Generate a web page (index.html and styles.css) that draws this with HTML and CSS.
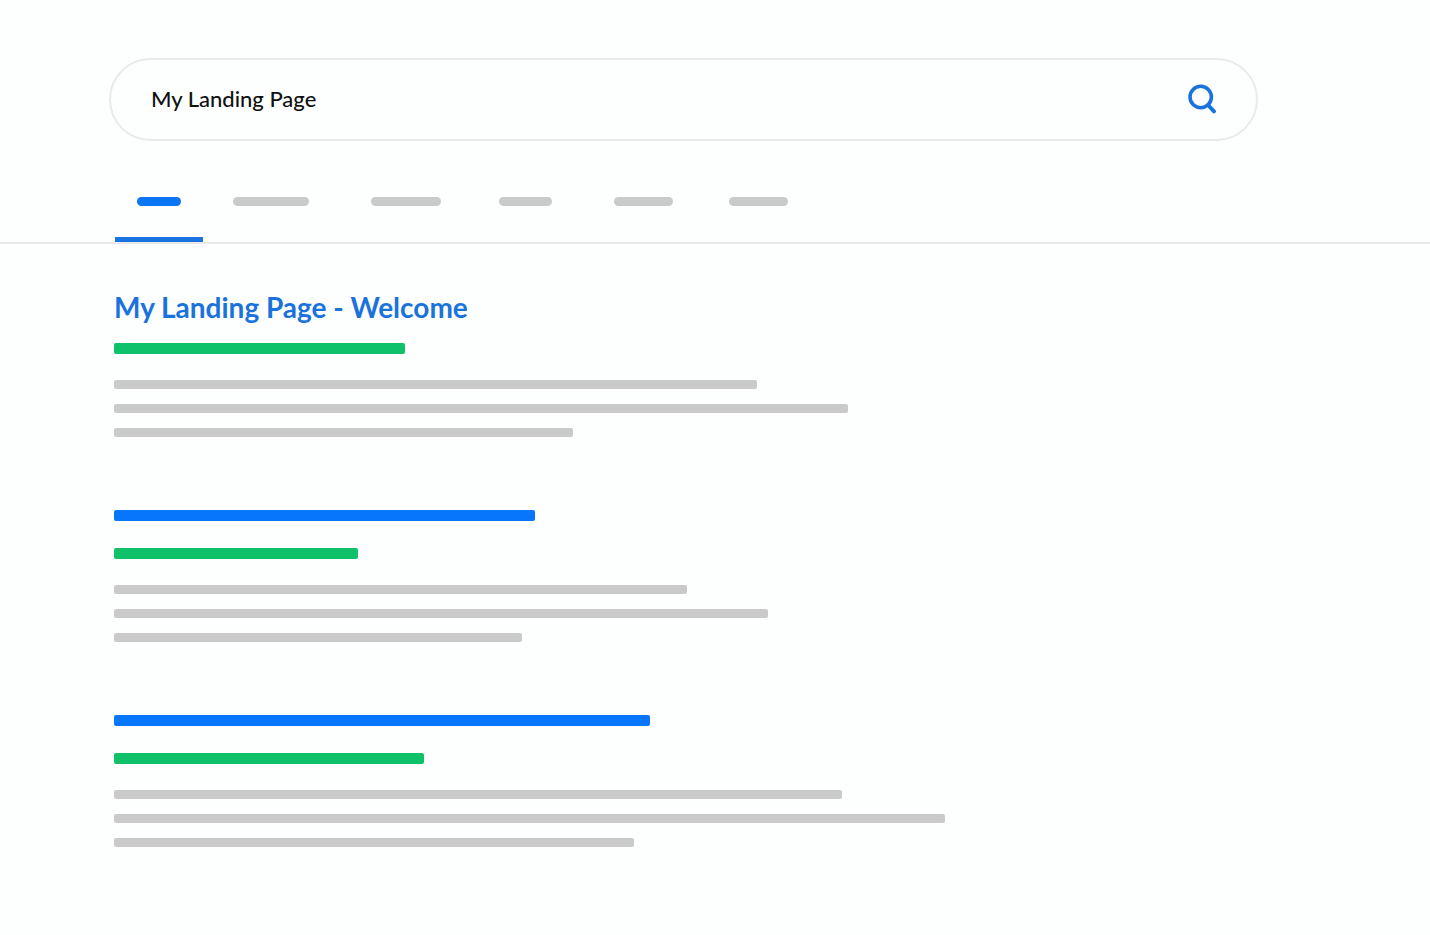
FILE: index.html
```html
<!DOCTYPE html>
<html lang="en">

<head>
  <meta charset="utf-8" />
  <meta name="viewport" content="width=device-width,initial-scale=1.0" />
  <title>My Landing Page</title>
  <link rel="stylesheet" href="styles.css">
</head>

<body>
  <header class="header">
    <form class="search" role="search">
      <input class="search-input" type="text" value="My Landing Page" aria-label="Search">
      <button class="search-btn" type="button" aria-label="Search">
        <svg width="30" height="32" viewBox="0 0 30 32" fill="none" stroke="#1a73dc">
          <circle cx="13.7" cy="14" r="10.7" stroke-width="3.6" />
          <path d="M21 22L27 28.4" stroke-width="4" stroke-linecap="round" />
        </svg>
      </button>
    </form>
    <nav class="tabs">
      <a class="tab active" href="#" aria-label="Tab 1"><span class="pill"></span></a>
      <a class="tab" href="#" aria-label="Tab 2"><span class="pill"></span></a>
      <a class="tab" href="#" aria-label="Tab 3"><span class="pill"></span></a>
      <a class="tab" href="#" aria-label="Tab 4"><span class="pill"></span></a>
      <a class="tab" href="#" aria-label="Tab 5"><span class="pill"></span></a>
      <a class="tab" href="#" aria-label="Tab 6"><span class="pill"></span></a>
    </nav>
  </header>

  <main class="results">
    <article class="result result-first">
      <h2 class="title"><a href="#">My Landing Page - Welcome</a></h2>
      <div class="bar url"></div>
      <div class="lines">
        <div class="bar line line1"></div>
        <div class="bar line line2"></div>
        <div class="bar line line3"></div>
      </div>
    </article>
    <article class="result result-second">
      <a class="bar heading" href="#" aria-label="Result 2"></a>
      <div class="bar url"></div>
      <div class="lines">
        <div class="bar line line1"></div>
        <div class="bar line line2"></div>
        <div class="bar line line3"></div>
      </div>
    </article>
    <article class="result result-third">
      <a class="bar heading" href="#" aria-label="Result 3"></a>
      <div class="bar url"></div>
      <div class="lines">
        <div class="bar line line1"></div>
        <div class="bar line line2"></div>
        <div class="bar line line3"></div>
      </div>
    </article>
  </main>
</body>

</html>
```

FILE: styles.css
```css
* {
  box-sizing: border-box;
}

body {
  margin: 0;
  background: #fdfefe;
  font-family: Lato, "Liberation Sans", sans-serif;
}

.header {
  padding-top: 58px;
  border-bottom: 2px solid #e8e9e9;
}

/* search box */
.search {
  display: flex;
  align-items: center;
  height: 83px;
  margin: 0 172px 0 109px;
  padding: 0 39px 2px 40px;
  border: 2px solid #e9eaea;
  border-radius: 42px;
}

.search-input {
  flex: 1;
  min-width: 0;
  padding: 0;
  border: 0;
  outline: 0;
  background: none;
  color: #111;
  font-family: inherit;
  font-size: 22px;
  font-weight: 500;
  line-height: 28px;
}

.search-btn {
  display: flex;
  padding: 0;
  border: 0;
  background: none;
  cursor: pointer;
}

/* tabs */
.tabs {
  display: flex;
  height: 101px;
  padding-left: 115px;
}

.tab {
  display: flex;
  justify-content: center;
  padding-top: 56px;
  border-bottom: 5px solid transparent;
}

.tab.active {
  border-bottom-color: #1a73e0;
}

.pill {
  height: 9px;
  border-radius: 5px;
  background: #c9caca;
}

.active .pill {
  background: #0a75f5;
}

.tab:nth-child(1) { width: 88px; }
.tab:nth-child(2) { width: 136px; }
.tab:nth-child(3) { width: 134px; }
.tab:nth-child(4) { width: 105px; }
.tab:nth-child(5) { width: 131px; }
.tab:nth-child(6) { width: 99px; }

.tab:nth-child(1) .pill { width: 44px; }
.tab:nth-child(2) .pill { width: 76px; }
.tab:nth-child(3) .pill { width: 70px; }
.tab:nth-child(4) .pill { width: 53px; }
.tab:nth-child(5) .pill { width: 59px; }
.tab:nth-child(6) .pill { width: 59px; }

/* results */
.results {
  display: flex;
  flex-direction: column;
  gap: 73px;
  padding: 47px 114px;
}

.title {
  margin: 0 0 20px;
  font-size: 28px;
  font-weight: 700;
  line-height: 32px;
}

.title a {
  color: #1a73dc;
  text-decoration: none;
}

.bar {
  display: block;
  max-width: 100%;
  height: 11px;
  border-radius: 2px;
}

.heading {
  margin-bottom: 27px;
  background: #0876fb;
}

.url {
  margin-bottom: 26px;
  background: #0fc168;
}

.lines {
  display: flex;
  flex-direction: column;
  gap: 15px;
}

.line {
  height: 9px;
  background: #cacaca;
}

.result-first .url { width: 291px; }
.result-first .line1 { width: 643px; }
.result-first .line2 { width: 734px; }
.result-first .line3 { width: 459px; }

.result-second .heading { width: 421px; }
.result-second .url { width: 244px; }
.result-second .line1 { width: 573px; }
.result-second .line2 { width: 654px; }
.result-second .line3 { width: 408px; }

.result-third .heading { width: 536px; }
.result-third .url { width: 310px; }
.result-third .line1 { width: 728px; }
.result-third .line2 { width: 831px; }
.result-third .line3 { width: 520px; }
```
